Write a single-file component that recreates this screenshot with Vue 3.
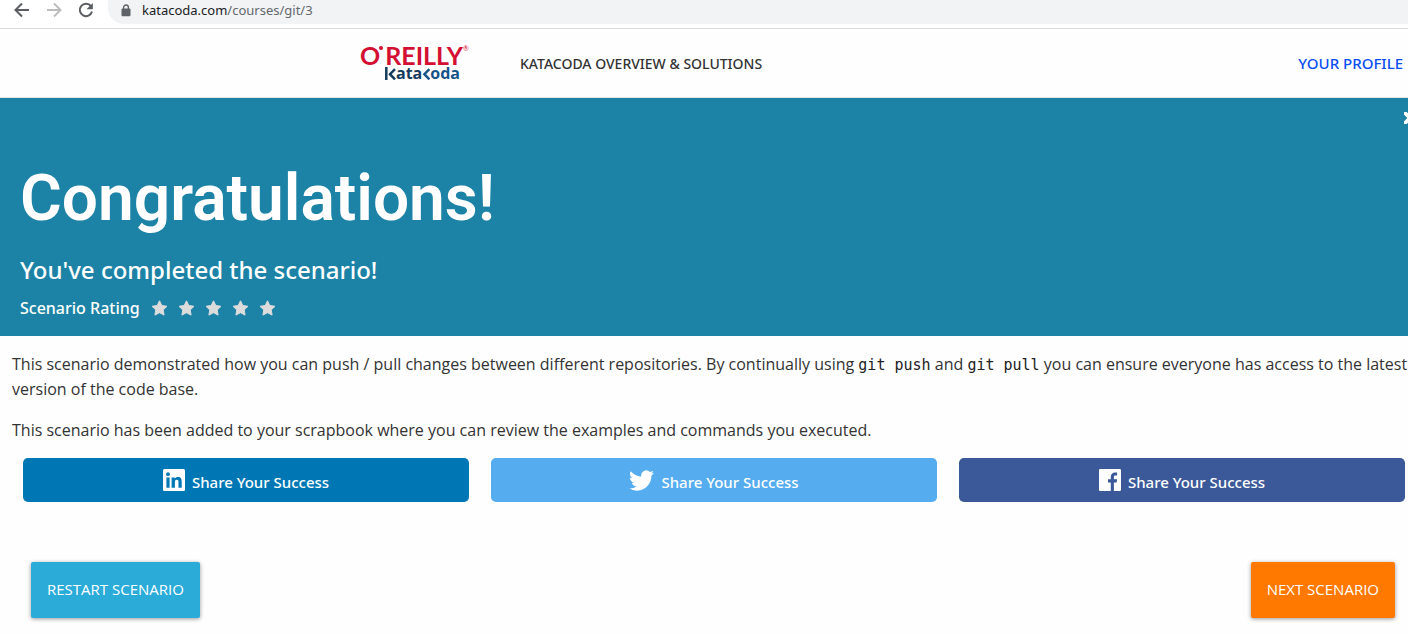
<script setup>
const rating = [1, 2, 3, 4, 5]
const networks = ['linkedin', 'twitter', 'facebook']
const labels = { linkedin: 'LinkedIn', twitter: 'Twitter', facebook: 'Facebook' }
</script>

<template>
  <div class="page">
    <div class="browser-bar">
      <button class="tool" type="button" aria-label="Back">
        <svg viewBox="0 0 16 16" width="16" height="16"><path d="M15 8H2M8 1.5 1.5 8 8 14.5" /></svg>
      </button>
      <button class="tool faded" type="button" aria-label="Forward">
        <svg viewBox="0 0 16 16" width="16" height="16"><path d="M1 8h13M8 1.5 14.5 8 8 14.5" /></svg>
      </button>
      <button class="tool" type="button" aria-label="Reload">
        <svg viewBox="0 0 16 16" width="16" height="16">
          <path d="M13 4.2A6.2 6.2 0 1 0 14 9.6" />
          <path class="solid" d="M14.8 1v6.3H8.5z" />
        </svg>
      </button>
      <div class="address">
        <svg class="lock" viewBox="0 0 10 13" width="10" height="13">
          <path d="M2.6 6V3.4a2.4 2.4 0 0 1 4.8 0V6" fill="none" stroke="#5f6368" stroke-width="1.4" />
          <rect x="0.5" y="4.6" width="9" height="7.6" rx="1" fill="#5f6368" />
        </svg>
        <span class="url"><span class="host">katacoda.com</span>/courses/git/3</span>
      </div>
    </div>

    <header class="site-header">
      <a class="logo" href="#" aria-label="O'Reilly Katacoda">
        <span class="logo-top">O<i class="dot"></i>REILLY<span class="reg">®</span></span>
        <span class="logo-sub">
          <svg viewBox="0 0 11 13" width="11" height="13"><path d="M1.300 0v13M10 2.200 5 7.200l5 5.200" fill="none" stroke="#153c5c" stroke-width="2.500" /></svg>
          <span>ata</span>
          <svg viewBox="0 0 8 13" width="8" height="13"><path d="M7.400 2.200 2.400 7.200l5 5.200" fill="none" stroke="#17548a" stroke-width="2.500" /></svg>
          <span class="oda">oda</span>
        </span>
      </a>
      <a class="nav-link" href="#">KATACODA OVERVIEW &amp; SOLUTIONS</a>
      <a class="profile" href="#">YOUR PROFILE</a>
    </header>

    <section class="banner">
      <button class="close" type="button" aria-label="Close">
        <svg viewBox="0 0 12 12" width="12" height="12"><path d="M1.5 1.5l9 9M10.5 1.5l-9 9" fill="none" stroke="#fff" stroke-width="3.8" stroke-linecap="round" /></svg>
      </button>
      <h1>Congratulations!</h1>
      <h2>You've completed the scenario!</h2>
      <div class="rating">
        <span>Scenario Rating</span>
        <span class="stars">
          <button v-for="n in rating" :key="n" class="star" type="button" :aria-label="`Rate ${n}`">
            <svg viewBox="0 0 17 16" width="17" height="16">
              <path d="M8.500.8l2.300 4.700 5.200.8-3.800 3.600.9 5.200-4.600-2.400-4.600 2.400.9-5.200L1 6.300l5.200-.8z" fill="#dcdcdc" stroke="#dcdcdc" stroke-linejoin="round" />
            </svg>
          </button>
        </span>
      </div>
    </section>

    <main class="content">
      <p class="lead">This scenario demonstrated how you can push / pull changes between different repositories. By continually using <code>git push</code> and <code>git pull</code> you can ensure everyone has access to the latest<br />version of the code base.</p>
      <p>This scenario has been added to your scrapbook where you can review the examples and commands you executed.</p>
      <div class="shares">
        <button v-for="n in networks" :key="n" type="button" class="share" :class="n" :title="labels[n]">
          <svg v-if="n === 'linkedin'" viewBox="0 0 22 22" width="22" height="22">
            <rect width="22" height="22" rx="1.500" fill="#fff" />
            <g fill="#0077b5"><circle cx="5" cy="5.200" r="1.900" /><path d="M3.400 8.400h3.200v10.300H3.400zM8.600 8.400h3.100v1.400c.6-1 1.700-1.700 3.200-1.700 3.100 0 3.800 2 3.800 4.700v5.900h-3.200v-5.200c0-1.300 0-2.700-1.700-2.700s-1.900 1.300-1.900 2.600v5.300H8.600z" /></g>
          </svg>
          <svg v-else-if="n === 'twitter'" viewBox="0 0 24 24" width="25" height="25">
            <path fill="#fff" d="M23.950 4.570a10 10 0 0 1-2.820.770 4.960 4.960 0 0 0 2.160-2.720c-.950.550-2 .950-3.130 1.180a4.920 4.920 0 0 0-8.380 4.480C7.690 8.090 4.070 6.130 1.640 3.160a4.900 4.900 0 0 0 1.520 6.570 4.900 4.900 0 0 1-2.230-.610v.060a4.920 4.920 0 0 0 3.950 4.830 5 5 0 0 1-2.210.080 4.940 4.940 0 0 0 4.600 3.420A9.870 9.870 0 0 1 0 19.540a14 14 0 0 0 7.550 2.210c9.050 0 14-7.500 14-13.980 0-.210 0-.420-.020-.630a9.940 9.940 0 0 0 2.460-2.550z" />
          </svg>
          <svg v-else viewBox="0 0 22 22" width="22" height="22">
            <rect width="22" height="22" rx="1.200" fill="#fff" />
            <path fill="#3b5998" d="M11.800 22v-8.400H9v-3.300h2.800V7.900c0-2.800 1.700-4.400 4.300-4.400.800 0 1.500 0 2 .1v3h-1.700c-1.200 0-1.500.700-1.500 1.600v2.100h3.200l-.4 3.300h-2.800V22z" />
          </svg>
          <span class="share-text">Share Your Success</span>
        </button>
      </div>
      <div class="actions">
        <button type="button" class="action restart">RESTART SCENARIO</button>
        <button type="button" class="action next">NEXT SCENARIO</button>
      </div>
    </main>
  </div>
</template>

<style>
body { margin: 0; background: #fefefe; }
</style>

<style scoped>
.page { overflow: hidden; font-family: "Open Sans", "Noto Sans", sans-serif; font-size: 16px; color: #333; }
button { font-family: inherit; border: 0; cursor: pointer; }
a { text-decoration: none; }
svg { display: block; flex: none; }

.browser-bar { display: flex; align-items: flex-start; height: 28px; padding-left: 14px; background: #fff; border-bottom: 1px solid #dadce0; }
.tool { padding: 2px 0 0; margin-right: 16px; background: none; }
.tool path { fill: none; stroke: #5a5d61; stroke-width: 2; }
.tool .solid { fill: #5a5d61; stroke: none; }
.faded path { stroke: #bbbcbe; }
.address { display: flex; flex: 1; align-items: center; gap: 11px; height: 24px; margin-left: -2px; padding-left: 13px; background: #f1f3f4; border-radius: 0 0 0 16px; }
.url { padding-bottom: 4px; font: 13px/18px "Noto Sans", sans-serif; color: #65696d; }
.lock { margin-bottom: 4px; }
.host { color: #202124; }

.site-header { display: flex; align-items: center; height: 68px; padding: 0 5px 0 360px; border-bottom: 1px solid #e4e4e4; }
.logo { display: flex; flex-direction: column; width: 112px; margin-right: 48px; padding-bottom: 2px; }
.logo-top { display: flex; font: 700 25px/22px Lato, sans-serif; color: #d30f32; }
.dot { width: 4px; height: 4px; margin: 2px 2px 0 -1px; border-radius: 50%; background: #d30f32; }
.reg { font-size: 7px; line-height: 8px; font-weight: 400; }
.logo-sub { display: flex; align-items: flex-end; padding-left: 25px; font: 700 16px/14px "Open Sans", sans-serif; color: #153c5c; }
.logo-sub .oda { color: #17548a; }
.nav-link { font-family: "Noto Sans", sans-serif; font-size: 14px; font-weight: 500; color: #333; }
.profile { margin-left: auto; font-family: "Noto Sans", sans-serif; font-size: 15px; font-weight: 500; color: #0a4df0; }

.banner { position: relative; padding: 61px 20px 12px; color: #fff; background: #1d83a6; }
.close { position: absolute; top: 14px; right: -8px; padding: 0; background: none; }
h1 { margin: 0; font: 600 64px/80px Roboto, sans-serif; }
h2 { margin: 13px 0 3px; font: 500 24px/36px "Noto Sans", sans-serif; }
.rating { display: flex; align-items: center; gap: 11px; height: 33px; font-family: "Noto Sans", sans-serif; font-weight: 500; line-height: 24px; }
.stars { display: flex; gap: 10px; }
.star { padding: 0; background: none; }

.content { padding: 16px 3px 16px 12px; }
p { margin: 0 0 16px; line-height: 25px; }
.lead { white-space: nowrap; }
code { font: 15px/20px "DejaVu Sans Mono", monospace; color: #222; }
.shares { display: flex; gap: 22px; margin: -1px 0 0 11px; }
.share { display: flex; flex: 1; align-items: center; justify-content: center; gap: 7px; height: 44px; border-radius: 5px; font-family: "Noto Sans", sans-serif; font-size: 15px; font-weight: 500; color: #fff; }
.share-text { padding-top: 4px; }
.linkedin { background: #0077b5; }
.twitter { background: #55acee; }
.facebook { background: #3b5998; }
.actions { display: flex; justify-content: space-between; margin: 60px 10px 0 19px; }
.action { height: 56px; padding: 0 16px 2px; border-radius: 2px; font-size: 15px; font-weight: 400; color: #fff; box-shadow: 0 1px 4px rgba(0, 0, 0, .4); }
.restart { background: #2babd8; }
.next { background: #ff7800; }
</style>
